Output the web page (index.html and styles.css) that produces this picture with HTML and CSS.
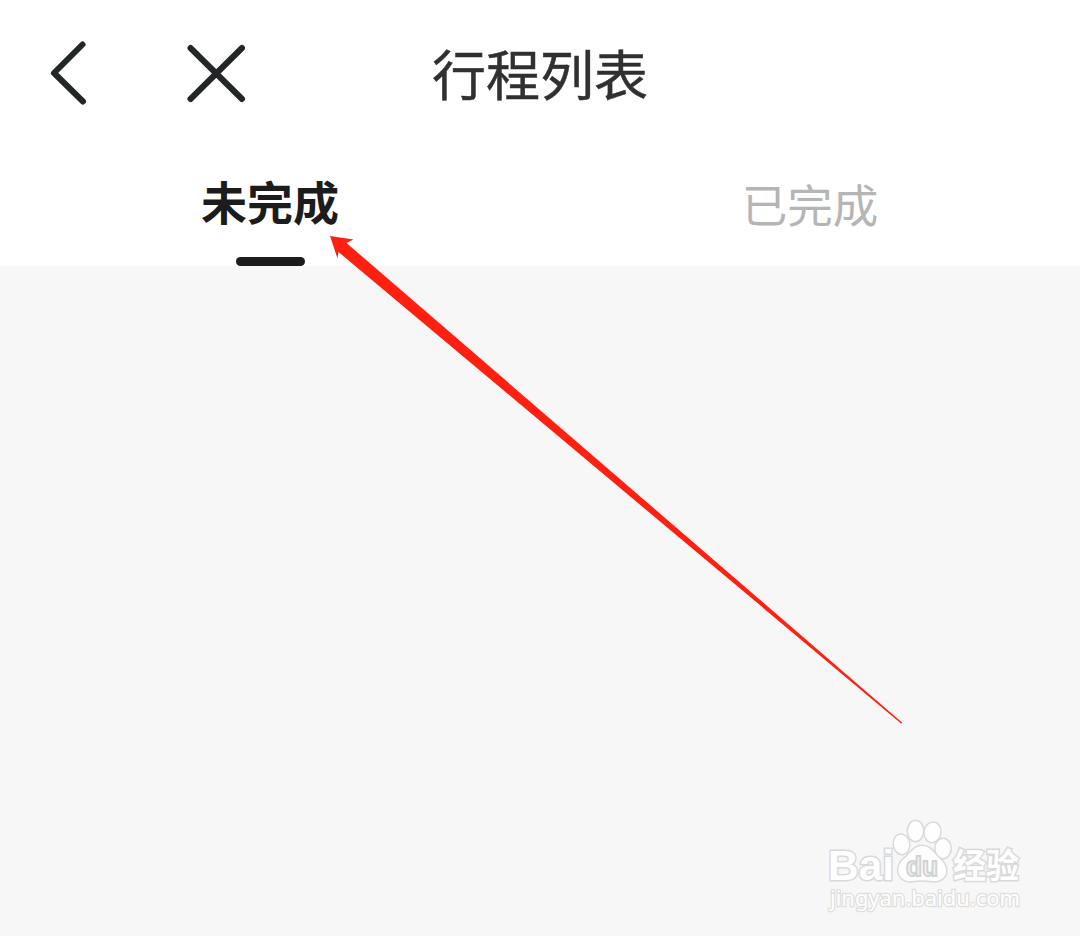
FILE: index.html
```html
<!DOCTYPE html>
<html lang="zh-CN">
  <head>
    <meta charset="UTF-8" />
    <meta name="viewport" content="width=device-width, initial-scale=1.0" />
    <title>行程列表</title>
    <link rel="stylesheet" href="styles.css">
  </head>
  <body>
    <div class="page">
      <header class="header">
        <div class="nav">
          <svg class="back" viewBox="0 0 40 66" width="40" height="66">
            <path d="M34.5 4.500 L6 33 L35 61.500" />
          </svg>
          <svg class="close" viewBox="0 0 60 60" width="60" height="60">
            <path d="M4.500 5 L56 56 M56 5 L4.500 56" />
          </svg>
        </div>
        <h1 class="title">行程列表</h1>
      </header>

      <div class="tabs">
        <div class="tab active">未完成</div>
        <div class="tab">已完成</div>
      </div>

      <main class="content"></main>

      <svg class="arrow" viewBox="0 0 1080 936" width="1080" height="936">
        <path d="M330 236 L353.500 239.500 L346.500 243 L902.300 722.700 L901.300 723.700 L338.500 252 L337.500 258.500 Z" />
      </svg>

      <svg class="watermark" viewBox="0 0 220 110" width="220" height="110">
        <g class="shape">
          <text class="logo" x="13" y="70" textLength="66" lengthAdjust="spacingAndGlyphs">Bai</text>
          <ellipse cx="86.500" cy="34.300" rx="7.500" ry="9.700" transform="rotate(-8 86.500 34.300)" />
          <ellipse cx="100.500" cy="21" rx="7.500" ry="10" />
          <ellipse cx="117.500" cy="22.300" rx="7.700" ry="9.700" transform="rotate(8 117.500 22.300)" />
          <ellipse cx="128" cy="38.500" rx="7.500" ry="9.500" />
          <path d="M107 36 C99 36 96 43 90 48 C85 52 83 56 83.500 61 C84 68 90 72 97 71 C104 70 110 70 117 71 C125 72 131 68 131 61 C131 55 128 52 123 47 C118 42 115 36 107 36 Z" />
          <text class="jingyan" x="138" y="67.500" textLength="66" lengthAdjust="spacingAndGlyphs">经验</text>
        </g>
        <text class="du" x="91" y="66" textLength="32" lengthAdjust="spacingAndGlyphs">du</text>
        <text class="url" x="15" y="96" textLength="190" lengthAdjust="spacingAndGlyphs">jingyan.baidu.com</text>
      </svg>
    </div>
  </body>
</html>
```
FILE: styles.css
```css
body {
  margin: 0;
  background-color: #fff;
  font-family: "Noto Sans CJK SC", sans-serif;
}
.page {
  position: relative;
  display: flex;
  flex-direction: column;
  height: 936px;
  overflow: hidden;
}

.header {
  display: grid;
  grid-template-columns: 1fr auto 1fr;
  align-items: center;
  height: 146px;
}
.nav {
  display: flex;
  align-items: center;
  gap: 98px;
  padding-left: 48px;
}
.back,
.close {
  fill: none;
  stroke: #222626;
  stroke-width: 6;
  stroke-linecap: round;
  stroke-linejoin: round;
}
.title {
  margin: 0;
  font-size: 54px;
  font-weight: 400;
  line-height: 80px;
  color: #303030;
  -webkit-text-stroke: 0.5px #303030;
}

.tabs {
  display: flex;
  height: 120px;
}
.tab {
  flex: 1;
  display: flex;
  flex-direction: column;
  align-items: center;
  padding-top: 23px;
  font-size: 45.5px;
  line-height: 68px;
  color: #b5b5b5;
}
.tab.active {
  padding-top: 20px;
  font-size: 46px;
  font-weight: 700;
  color: #1c1c1c;
}
.tab.active::after {
  content: "";
  width: 69px;
  height: 9px;
  margin-top: 23px;
  border-radius: 5px;
  background-color: #1c1c1c;
}

.content {
  flex: 1;
  background-color: #f7f7f7;
}

.arrow {
  position: absolute;
  left: 0;
  top: 0;
  fill: #ff2012;
}

.watermark {
  position: absolute;
  right: 45px;
  bottom: 16px;
}
.shape {
  fill: #fefefe;
  stroke: #d9d9d9;
  stroke-width: 3;
  paint-order: stroke;
}
.logo {
  font-family: "Liberation Sans", Arial, sans-serif;
  font-size: 43px;
  font-weight: 700;
}
.jingyan {
  font-size: 34px;
  font-weight: 700;
}
.du {
  font-family: "Liberation Sans", Arial, sans-serif;
  font-size: 28px;
  font-weight: 700;
  fill: #f4f4f4;
  stroke: #d2d2d2;
  stroke-width: 2;
}
.url {
  font-family: "Noto Sans", sans-serif;
  font-size: 22px;
  fill: #fefefe;
  stroke: #dedede;
  stroke-width: 2.5;
  paint-order: stroke;
}
```
